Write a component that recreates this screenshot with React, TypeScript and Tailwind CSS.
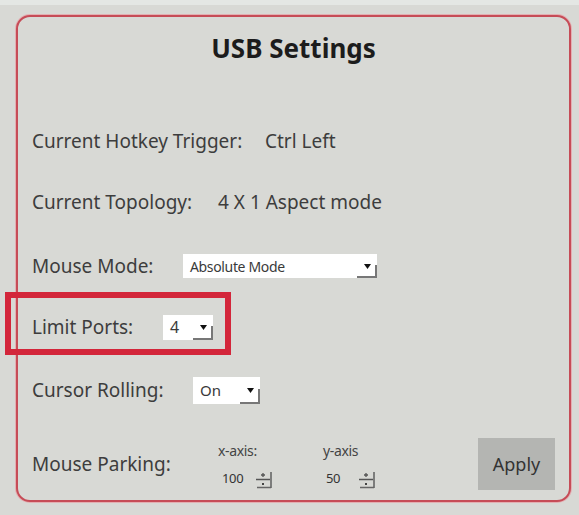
import type { ReactNode } from "react";

const font = { fontFamily: '"Noto Sans", "Open Sans", "Liberation Sans", sans-serif' };

function Arrow() {
  return (
    <svg width="7" height="5" viewBox="0 0 7 5" aria-hidden>
      <path d="M0 0h7L3.5 5z" fill="#111" />
    </svg>
  );
}

function Select({ value, width, height, textClass }: { value: string; width: string; height: string; textClass: string }) {
  return (
    <div className={`flex items-stretch bg-white ${width} ${height}`}>
      <span className={`flex flex-1 items-center pl-[7px] text-[#3a3a3a] ${textClass}`}>{value}</span>
      <span className="flex w-[20px] items-center justify-center">
        <span className="relative flex h-full w-full items-center justify-center">
          <Arrow />
          <span className="absolute bottom-0 right-0 h-[55%] w-[2px] bg-[#777]" />
          <span className="absolute bottom-0 right-0 h-[2px] w-full bg-[#777]" />
        </span>
      </span>
    </div>
  );
}

function Spinner() {
  return (
    <svg width="19" height="19" viewBox="0 0 19 19" aria-hidden>
      <path d="M9 3v4M7 5h4" stroke="#555" strokeWidth="1.3" />
      <path d="M2 9.5h14" stroke="#555" strokeWidth="1.5" />
      <path d="M8 13h2v2H8z" fill="#444" />
      <path d="M17 2v16M3 17.5h14" stroke="#666" strokeWidth="1.6" />
    </svg>
  );
}

function Row({ label, labelWidth, mt, children }: { label: string; labelWidth: string; mt: string; children: ReactNode }) {
  return (
    <div className={`flex h-[40px] items-center ${mt}`}>
      <span className={`shrink-0 text-[19px] text-[#3d3d3d] ${labelWidth}`}>{label}</span>
      {children}
    </div>
  );
}

function Axis({ name, value, width, valuePad, gapClass }: { name: string; value: string; width: string; valuePad: string; gapClass: string }) {
  return (
    <div className={`flex flex-col ${width}`}>
      <span className="text-[14px] leading-[16px] tracking-tight text-[#444]">{name}</span>
      <div className={`mt-[10px] flex items-center ${valuePad} ${gapClass}`}>
        <span className="text-[13px] tracking-tight text-[#333]">{value}</span>
        <Spinner />
      </div>
    </div>
  );
}

export default function App() {
  return (
    <div className="relative h-[515px] w-[579px] overflow-hidden bg-[#d8d9d5] pl-[16px] pt-[15px]" style={font}>
      <div className="absolute inset-x-0 top-0 h-[5px] bg-[#e4e7e4]" />
      <div className="relative flex h-[487px] w-[555px] flex-col rounded-[14px] border-2 border-[#c64c57] bg-[#d8d9d5] px-[14px] shadow-[0_0_0_1px_rgba(236,140,150,0.55)]">
        <div className="flex h-[62px] items-center justify-center">
          <h1 className="text-[26px] font-bold text-[#1c1c1c]">USB Settings</h1>
        </div>

        <Row label="Current Hotkey Trigger:" labelWidth="w-[233px]" mt="mt-[42px]">
          <span className="text-[19px] text-[#3d3d3d]">Ctrl Left</span>
        </Row>

        <Row label="Current Topology:" labelWidth="w-[186px]" mt="mt-[21px]">
          <span className="text-[19px] text-[#3d3d3d]">4 X 1 Aspect mode</span>
        </Row>

        <Row label="Mouse Mode:" labelWidth="w-[151px]" mt="mt-[24px]">
          <Select value="Absolute Mode" width="w-[194px]" height="h-[24px]" textClass="text-[14px] tracking-tight" />
        </Row>

        <Row label="Limit Ports:" labelWidth="w-[131px]" mt="mt-[21px]">
          <Select value="4" width="w-[50px]" height="h-[25px]" textClass="text-[16px]" />
        </Row>

        <Row label="Cursor Rolling:" labelWidth="w-[161px]" mt="mt-[23px]">
          <Select value="On" width="w-[67px]" height="h-[27px]" textClass="text-[15px]" />
        </Row>

        <div className="mt-[28px] flex h-[52px] items-center">
          <span className="w-[186px] shrink-0 text-[19px] text-[#3d3d3d]">Mouse Parking:</span>
          <div className="flex items-start pt-[4px]">
            <Axis name="x-axis:" value="100" width="w-[105px]" valuePad="pl-[4px]" gapClass="gap-[11px]" />
            <Axis name="y-axis" value="50" width="w-[70px]" valuePad="pl-[3px]" gapClass="gap-[17px]" />
          </div>
          <button className="ml-auto flex h-[52px] w-[77px] items-center justify-center bg-[#b4b5b2] text-[18px] text-[#333]">
            Apply
          </button>
        </div>
      </div>

      <div className="absolute left-[5px] top-[292px] h-[63px] w-[226px] border-[6px] border-[#d3263a]" />
    </div>
  );
}
